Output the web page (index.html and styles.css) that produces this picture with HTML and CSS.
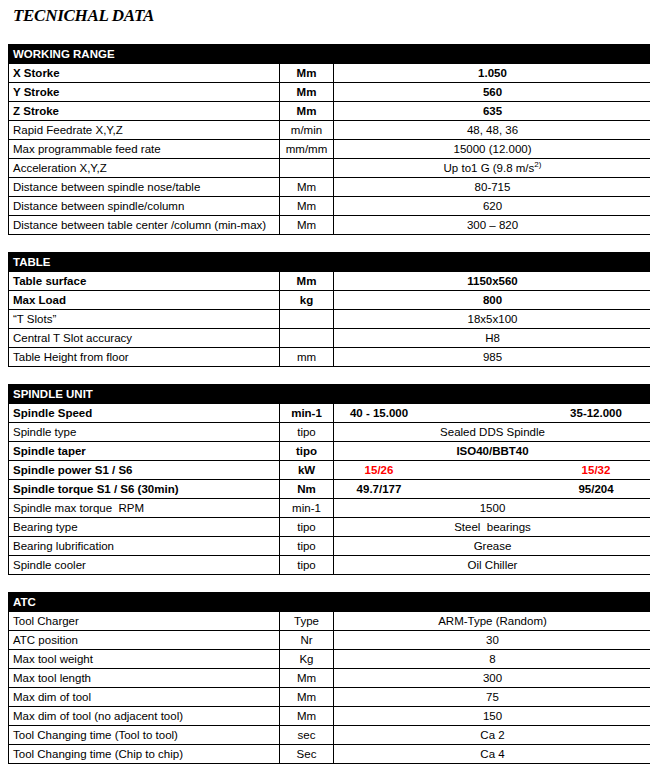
FILE: index.html
```html
<!DOCTYPE html>
<html>
<head>
<meta charset="utf-8">
<link rel="stylesheet" href="styles.css">
</head>
<body>
<h1 class="title">TECNICHAL DATA</h1>

<table class="spec">
  <colgroup><col class="c1"><col class="c2"><col class="c3"></colgroup>
  <tr class="head"><td colspan="3">WORKING RANGE</td></tr>
  <tr class="b"><td>X Storke</td><td class="u">Mm</td><td class="v">1.050</td></tr>
  <tr class="b"><td>Y Stroke</td><td class="u">Mm</td><td class="v">560</td></tr>
  <tr class="b"><td>Z Stroke</td><td class="u">Mm</td><td class="v">635</td></tr>
  <tr><td>Rapid Feedrate X,Y,Z</td><td class="u">m/min</td><td class="v">48, 48, 36</td></tr>
  <tr><td>Max programmable feed rate</td><td class="u">mm/mm</td><td class="v">15000 (12.000)</td></tr>
  <tr><td>Acceleration X,Y,Z</td><td class="u"></td><td class="v">Up to1 G (9.8 m/s<sup>2)</sup></td></tr>
  <tr><td>Distance between spindle nose/table</td><td class="u">Mm</td><td class="v">80-715</td></tr>
  <tr><td>Distance between spindle/column</td><td class="u">Mm</td><td class="v">620</td></tr>
  <tr><td>Distance between table center /column (min-max)</td><td class="u">Mm</td><td class="v">300 – 820</td></tr>
</table>

<table class="spec">
  <colgroup><col class="c1"><col class="c2"><col class="c3"></colgroup>
  <tr class="head"><td colspan="3">TABLE</td></tr>
  <tr class="b"><td>Table surface</td><td class="u">Mm</td><td class="v">1150x560</td></tr>
  <tr class="b"><td>Max Load</td><td class="u">kg</td><td class="v">800</td></tr>
  <tr><td>“T Slots”</td><td class="u"></td><td class="v">18x5x100</td></tr>
  <tr><td>Central T Slot accuracy</td><td class="u"></td><td class="v">H8</td></tr>
  <tr><td>Table Height from floor</td><td class="u">mm</td><td class="v">985</td></tr>
</table>

<table class="spec">
  <colgroup><col class="c1"><col class="c2"><col class="c3"></colgroup>
  <tr class="head"><td colspan="3">SPINDLE UNIT</td></tr>
  <tr class="b"><td>Spindle Speed</td><td class="u">min-1</td><td class="v split"><div class="pair"><span class="l">40 - 15.000</span><span class="r">35-12.000</span></div></td></tr>
  <tr><td>Spindle type</td><td class="u">tipo</td><td class="v">Sealed DDS Spindle</td></tr>
  <tr class="b"><td>Spindle taper</td><td class="u">tipo</td><td class="v">ISO40/BBT40</td></tr>
  <tr class="b"><td>Spindle power S1 / S6</td><td class="u">kW</td><td class="v split red"><div class="pair"><span class="l">15/26</span><span class="r">15/32</span></div></td></tr>
  <tr class="b"><td>Spindle torque S1 / S6 (30min)</td><td class="u">Nm</td><td class="v split"><div class="pair"><span class="l">49.7/177</span><span class="r">95/204</span></div></td></tr>
  <tr><td>Spindle max torque&nbsp; RPM</td><td class="u">min-1</td><td class="v">1500</td></tr>
  <tr><td>Bearing type</td><td class="u">tipo</td><td class="v">Steel&nbsp; bearings</td></tr>
  <tr><td>Bearing lubrification</td><td class="u">tipo</td><td class="v">Grease</td></tr>
  <tr><td>Spindle cooler</td><td class="u">tipo</td><td class="v">Oil Chiller</td></tr>
</table>

<table class="spec">
  <colgroup><col class="c1"><col class="c2"><col class="c3"></colgroup>
  <tr class="head"><td colspan="3">ATC</td></tr>
  <tr><td>Tool Charger</td><td class="u">Type</td><td class="v">ARM-Type (Random)</td></tr>
  <tr><td>ATC position</td><td class="u">Nr</td><td class="v">30</td></tr>
  <tr><td>Max tool weight</td><td class="u">Kg</td><td class="v">8</td></tr>
  <tr><td>Max tool length</td><td class="u">Mm</td><td class="v">300</td></tr>
  <tr><td>Max dim of tool</td><td class="u">Mm</td><td class="v">75</td></tr>
  <tr><td>Max dim of tool (no adjacent tool)</td><td class="u">Mm</td><td class="v">150</td></tr>
  <tr><td>Tool Changing time (Tool to tool)</td><td class="u">sec</td><td class="v">Ca 2</td></tr>
  <tr><td>Tool Changing time (Chip to chip)</td><td class="u">Sec</td><td class="v">Ca 4</td></tr>
</table>
</body>
</html>
```

FILE: styles.css
```css
html, body {
  background: #ffffff;
}
body {
  margin: 0 8px;
  font-family: "Liberation Sans", Arial, sans-serif;
  font-size: 11.5px;
  color: #000;
}
.title {
  margin: 0;
  padding: 6px 0 0 5px;
  height: 44px;
  box-sizing: border-box;
  font-family: "Liberation Serif", "Times New Roman", serif;
  font-weight: bold;
  font-style: italic;
  font-size: 17px;
  line-height: 20px;
  letter-spacing: -0.3px;
}
.spec {
  width: 643px;
  border-collapse: collapse;
  table-layout: fixed;
  margin-bottom: 17px;
}
.spec col.c1 { width: 271px; }
.spec col.c2 { width: 54px; }
.spec col.c3 { width: 318px; }
.spec td {
  border: 1px solid #000;
  height: 18px;
  padding: 0 4px;
  line-height: 18px;
  white-space: nowrap;
  overflow: visible;
}
.spec tr.head td {
  background: #000;
  color: #fff;
  font-weight: bold;
  height: 18px;
}
.spec tr.b td {
  font-weight: bold;
}
.spec td.u,
.spec td.v {
  text-align: center;
}
.spec td.split {
  padding: 0;
}
.pair {
  display: grid;
  grid-template-columns: 90px 1fr 110px;
}
.pair .l { grid-column: 1; text-align: center; }
.pair .r { grid-column: 3; text-align: center; }
.red { color: #ff0000; }
sup {
  font-size: 8px;
  line-height: 0;
  vertical-align: 5px;
}
```
